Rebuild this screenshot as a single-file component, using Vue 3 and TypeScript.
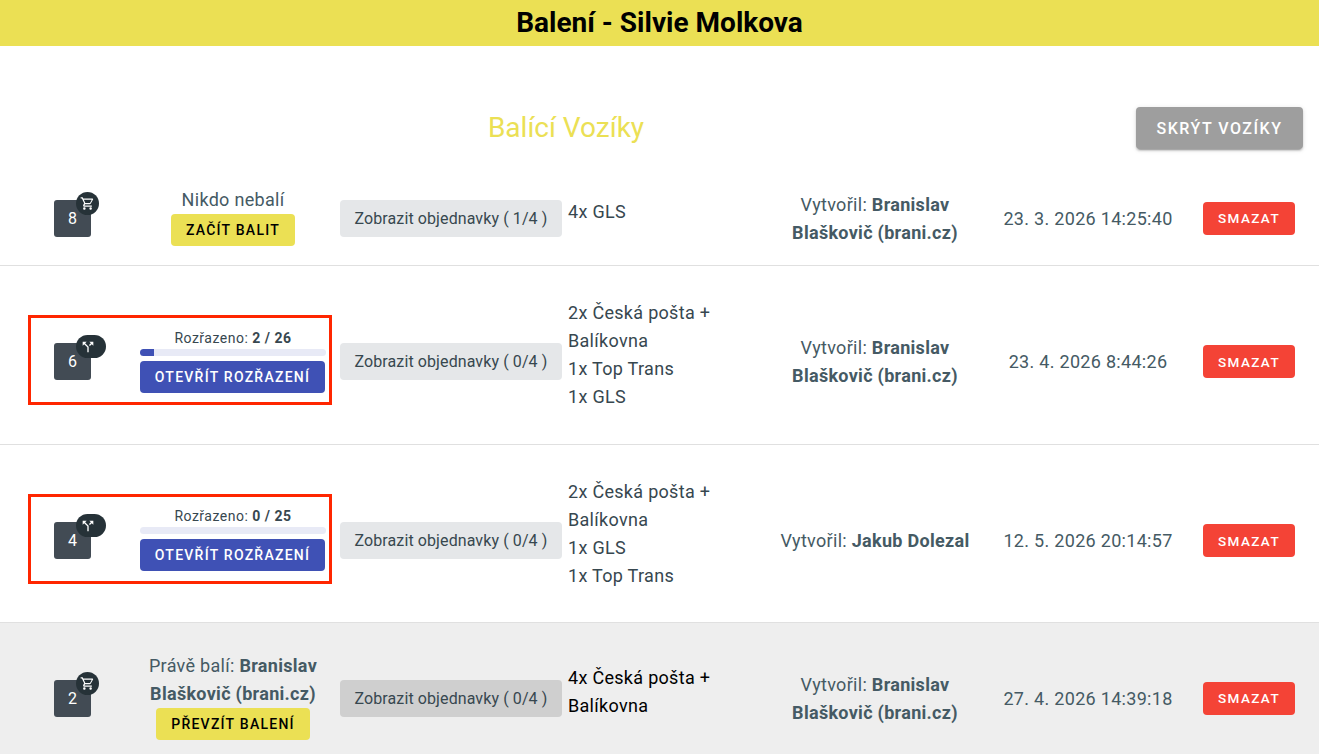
<script setup lang="ts">
interface Cart {
  id: number
  kind: 'cart' | 'split'
  note?: string
  packer?: string
  action?: string
  done?: number
  total?: number
  shown: string
  carriers: string[]
  author: string
  date: string
  active?: boolean
}

const cart =
  'M17,18A2,2 0 0,1 19,20A2,2 0 0,1 17,22C15.89,22 15,21.1 15,20C15,18.89 15.89,18 17,18M1,2H4.27L5.21,4H20A1,1 0 0,1 21,5C21,5.17 20.95,5.34 20.88,5.5L17.3,11.97C16.96,12.58 16.3,13 15.55,13H8.1L7.2,14.63L7.17,14.75A0.25,0.25 0 0,0 7.42,15H19V17H7C5.89,17 5,16.1 5,15C5,14.65 5.09,14.32 5.24,14.04L6.6,11.59L3,4H1V2M7,18A2,2 0 0,1 9,20A2,2 0 0,1 7,22C5.89,22 5,21.1 5,20C5,18.89 5.89,18 7,18M16,11L18.78,6H6.14L8.5,11H16Z'
const split =
  'M14,4L16.29,6.29L13.41,9.17L14.83,10.59L17.71,7.71L20,10V4M10,4H4V10L6.29,7.71L11,12.41V20H13V11.59L7.71,6.29'

const carts: Cart[] = [
  { id: 8, kind: 'cart', note: 'Nikdo nebalí', action: 'Začít balit', shown: '1/4', carriers: ['4x GLS'], author: 'Branislav Blaškovič (brani.cz)', date: '23. 3. 2026 14:25:40' },
  { id: 6, kind: 'split', done: 2, total: 26, shown: '0/4', carriers: ['2x Česká pošta + Balíkovna', '1x Top Trans', '1x GLS'], author: 'Branislav Blaškovič (brani.cz)', date: '23. 4. 2026 8:44:26' },
  { id: 4, kind: 'split', done: 0, total: 25, shown: '0/4', carriers: ['2x Česká pošta + Balíkovna', '1x GLS', '1x Top Trans'], author: 'Jakub Dolezal', date: '12. 5. 2026 20:14:57' },
  { id: 2, kind: 'cart', packer: 'Branislav Blaškovič (brani.cz)', action: 'Převzít balení', shown: '0/4', carriers: ['4x Česká pošta + Balíkovna'], author: 'Branislav Blaškovič (brani.cz)', date: '27. 4. 2026 14:39:18', active: true },
]

function pct(c: Cart): string {
  return `${((c.done ?? 0) / (c.total ?? 1)) * 100}%`
}
</script>

<template>
  <div class="page">
    <header class="topbar">Balení - Silvie Molkova</header>
    <section class="heading">
      <h2 class="heading-title">Balící Vozíky</h2>
      <button class="btn btn-hide">Skrýt vozíky</button>
    </section>
    <div
      v-for="c in carts"
      :key="c.id"
      class="row"
      :class="{ 'row-sort': c.kind === 'split', 'row-active': c.active }"
    >
      <div class="lead">
        <div v-if="c.kind === 'split'" class="frame"></div>
        <div class="badge-cell">
          <div class="num">
            {{ c.id }}
            <span class="tag" :class="{ 'tag-pill': c.kind === 'split' }">
              <svg viewBox="0 0 24 24" class="tag-icon"><path :d="c.kind === 'cart' ? cart : split" /></svg>
            </span>
          </div>
        </div>
        <div class="state">
          <template v-if="c.kind === 'split'">
            <div class="sort-label">Rozřazeno: <b>{{ c.done }} / {{ c.total }}</b></div>
            <div class="track"><div class="fill" :style="{ width: pct(c) }"></div></div>
            <button class="btn btn-sort">Otevřít rozřazení</button>
          </template>
          <template v-else>
            <div class="packer">
              <template v-if="c.packer">Právě balí: <b>{{ c.packer }}</b></template>
              <template v-else>{{ c.note }}</template>
            </div>
            <button class="btn btn-yellow">{{ c.action }}</button>
          </template>
        </div>
      </div>
      <div class="orders-cell">
        <button class="orders">Zobrazit objednavky ( {{ c.shown }} )</button>
      </div>
      <div class="carriers">
        <div v-for="line in c.carriers" :key="line">{{ line }}</div>
      </div>
      <div class="author">Vytvořil: <b>{{ c.author }}</b></div>
      <div class="date">{{ c.date }}</div>
      <div class="del-cell"><button class="btn btn-del">Smazat</button></div>
    </div>
  </div>
</template>

<style>
html, body { margin: 0; overflow: hidden; }
</style>

<style scoped>
.page {
  height: 754px;
  overflow: hidden;
  background: #fff;
  font-family: Roboto, "Liberation Sans", sans-serif;
  font-size: 18px;
  letter-spacing: 0.3px;
  line-height: 28px;
  color: #455a64;
}
.topbar {
  height: 46px;
  background: #ebe054;
  color: #000;
  font-size: 28px;
  font-weight: 700;
  letter-spacing: 0;
  line-height: 46px;
  text-align: center;
}
.heading {
  height: 111px;
  display: grid;
  grid-template-columns: 1132px 1fr;
  padding-right: 16px;
}
.heading-title {
  margin: 65px 0 0;
  justify-self: center;
  align-self: start;
  font-size: 28px;
  font-weight: 400;
  line-height: 34px;
  letter-spacing: 0;
  color: #ebe054;
}
.btn {
  border: 0;
  border-radius: 4px;
  font-family: inherit;
  font-weight: 500;
  text-transform: uppercase;
  cursor: pointer;
  height: 32px;
  padding: 0;
  font-size: 14px;
  letter-spacing: 1.25px;
}
.btn-hide {
  justify-self: end;
  margin-top: 61px;
  width: 167px;
  height: 42px;
  background: #9e9e9e;
  color: #fff;
  font-size: 16px;
  letter-spacing: 1.5px;
  box-shadow: 0 3px 1px -2px rgba(0,0,0,.2), 0 2px 2px rgba(0,0,0,.14), 0 1px 5px rgba(0,0,0,.12);
}
.row {
  display: grid;
  grid-template-columns: 332px 236px 202px 210px 216px 106px;
  align-items: center;
  padding: 29px 17px 15px 0;
  border-bottom: 1px solid #e0e0e0;
}
.row-sort { padding-top: 32.5px; padding-bottom: 19.5px; }
.row-sort + .row-sort { padding-bottom: 18.5px; }
.row-active { background: #eeeeee; }
.row:not(.row-sort) .carriers,
.row:not(.row-sort) .author,
.row:not(.row-sort) .date { padding-top: 1px; }
.lead {
  position: relative;
  display: grid;
  grid-template-columns: 140px 192px;
  align-items: center;
  align-self: stretch;
}
.frame {
  position: absolute;
  left: 28px;
  right: 0;
  top: calc(50% - 46.5px);
  height: 84px;
  border: 3px solid #ff2600;
  pointer-events: none;
}
.row-sort + .row-sort .frame { top: calc(50% - 47px); }
.badge-cell { padding-left: 54px; }
.num {
  position: relative;
  width: 37px;
  height: 37px;
  background: #424b54;
  border-radius: 3px;
  color: #fff;
  font-size: 16px;
  line-height: 37px;
  letter-spacing: 0;
  text-align: center;
}
.tag {
  position: absolute;
  left: 22px;
  top: -8px;
  height: 23px;
  width: 23px;
  border-radius: 12px;
  background: #263238;
  display: flex;
  align-items: center;
  justify-content: center;
}
.tag-pill { width: 30px; justify-content: flex-start; padding-left: 4px; box-sizing: border-box; }
.tag-icon { width: 15px; height: 15px; fill: #fff; }
.tag-pill .tag-icon { width: 16px; height: 16px; }
.state {
  width: 186px;
  display: flex;
  flex-direction: column;
  align-items: center;
}
.row-sort .state { margin-bottom: 1px; }
.row-sort + .row-sort .state { margin-bottom: 3px; }
.packer { text-align: center; }
.packer b { font-weight: 700; }
.btn-yellow { background: #ebe054; color: #000; padding: 0 15px; margin-bottom: 4px; }
.sort-label { font-size: 14px; line-height: 18px; letter-spacing: 0.5px; margin-bottom: 2px; color: #37474f; }
.sort-label b { font-weight: 700; }
.track { width: 186px; height: 7px; background: #e8eaf6; border-radius: 4px; overflow: hidden; margin-bottom: 5px; }
.fill { height: 100%; background: #3f51b5; }
.btn-sort { width: 185px; background: #3f51b5; color: #fff; align-self: flex-start; }
.orders-cell { padding-left: 8px; }
.orders {
  width: 222px;
  height: 37px;
  border: 0;
  border-radius: 4px;
  background: #e5e7e9;
  color: #37474f;
  font-family: inherit;
  font-size: 16px;
  letter-spacing: 0.1px;
  padding: 0;
}
.row-active .orders { background: #cfcfcf; }
.carriers { margin-bottom: 14px; color: #37474f; }
.row-active .carriers { color: #000; }
.author { text-align: center; padding: 0 4px; }
.author b { font-weight: 700; }
.date { text-align: center; }
.del-cell { display: flex; justify-content: center; }
.btn-del { width: 92px; height: 33px; background: #f44336; color: #fff; font-size: 13.5px; letter-spacing: 1.4px; }
</style>
